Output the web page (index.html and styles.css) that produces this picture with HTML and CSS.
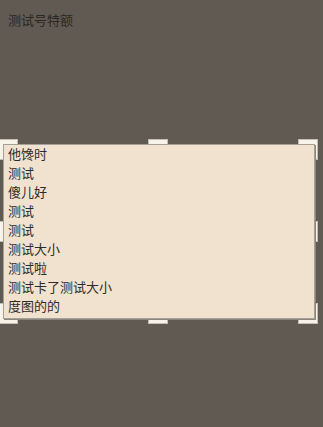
FILE: index.html
```html
<!DOCTYPE html>
<html>
<head>
<meta charset="utf-8">
<link rel="stylesheet" href="styles.css">
</head>
<body>
<div class="title">测试号特额</div>
<div class="stage">
  <span class="handle h-tl"></span>
  <span class="handle h-tm"></span>
  <span class="handle h-tr"></span>
  <span class="handle h-ml"></span>
  <span class="handle h-mr"></span>
  <span class="handle h-bl"></span>
  <span class="handle h-bm"></span>
  <span class="handle h-br"></span>
  <ul class="list">
    <li>他馋时</li>
    <li>测试</li>
    <li>傻儿好</li>
    <li>测试</li>
    <li>测试</li>
    <li>测试大小</li>
    <li>测试啦</li>
    <li>测试卡了测试大小</li>
    <li>度图的的</li>
  </ul>
</div>
</body>
</html>
```
FILE: styles.css
```css
html, body {
  margin: 0;
  padding: 0;
  background: #615a52;
  font-family: "Noto Sans CJK SC", "Noto Sans", sans-serif;
  font-size: 13px;
}
.title {
  padding: 10px 8px 0;
  line-height: 19px;
  color: #2a2826;
}
.stage {
  position: relative;
  margin-top: 110px;
  margin-left: -2px;
  width: 320px;
  height: 185px;
  display: flex;
}
.handle {
  position: absolute;
  width: 18px;
  height: 19px;
  background: #f7f3e8;
  border: 1px solid #c4beb3;
}
.h-tl { left: 0; top: 0; }
.h-tm { left: 150px; top: 0; }
.h-tr { right: 0; top: 0; }
.h-ml { left: 0; top: 82px; }
.h-mr { right: 0; top: 82px; }
.h-bl { left: 0; bottom: 0; }
.h-bm { left: 150px; bottom: 0; }
.h-br { right: 0; bottom: 0; }
.list {
  position: relative;
  list-style: none;
  margin: 5px 0 0 5px;
  padding: 0 0 0 4px;
  width: 306px;
  height: 173px;
  background: #f0e2cf;
  border: 1px solid #a49f97;
  box-shadow: 1px 1px 0 #8a857d;
  color: #2e2c2a;
}
.list li {
  line-height: 17px;
  height: 19px;
}
```
